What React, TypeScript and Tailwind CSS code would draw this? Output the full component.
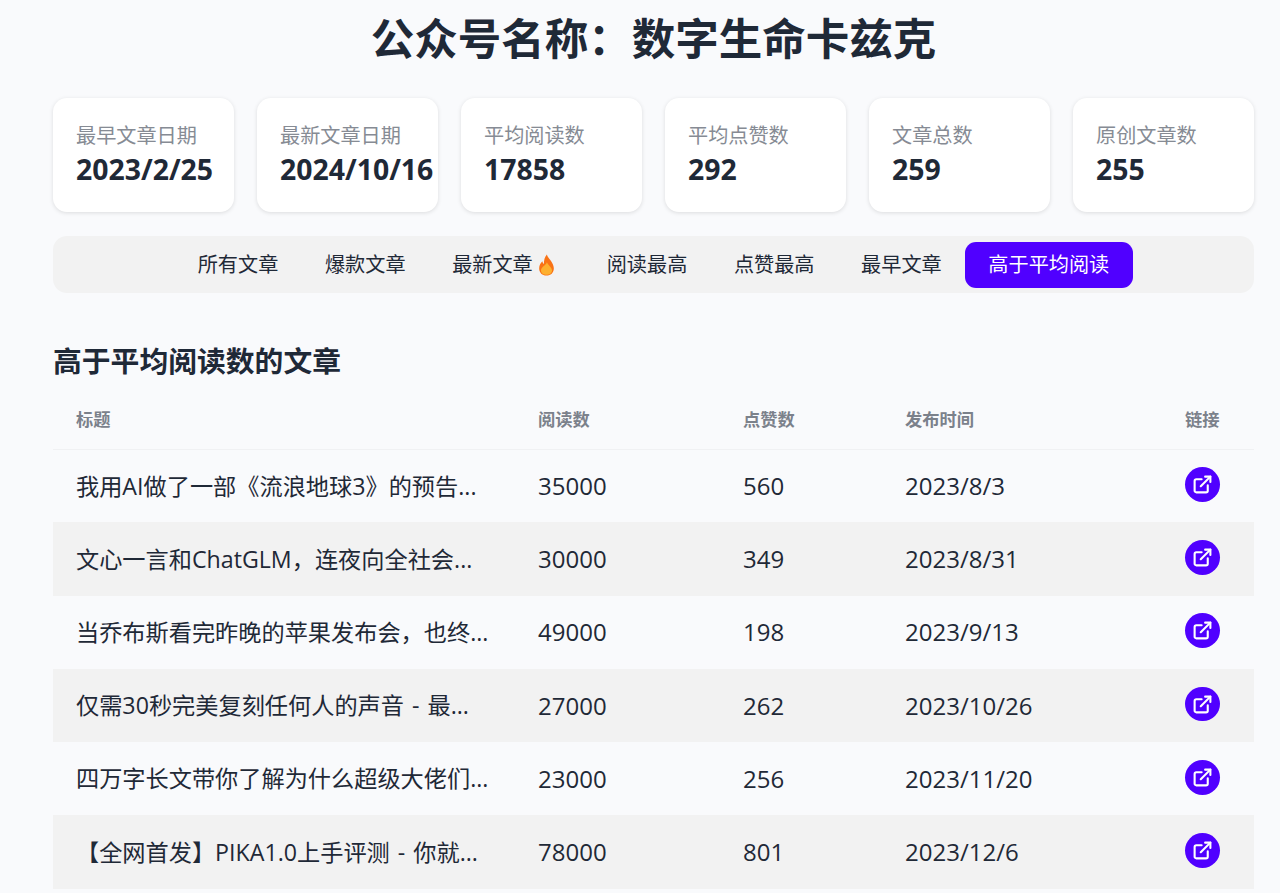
import { ExternalLink } from "lucide-react";

const stats = [
  { label: "最早文章日期", value: "2023/2/25" },
  { label: "最新文章日期", value: "2024/10/16" },
  { label: "平均阅读数", value: "17858" },
  { label: "平均点赞数", value: "292" },
  { label: "文章总数", value: "259" },
  { label: "原创文章数", value: "255" },
];

const tabs = ["所有文章", "爆款文章", "最新文章", "阅读最高", "点赞最高", "最早文章", "高于平均阅读"];

const rows = [
  ["我用AI做了一部《流浪地球3》的预告...", "35000", "560", "2023/8/3"],
  ["文心一言和ChatGLM，连夜向全社会...", "30000", "349", "2023/8/31"],
  ["当乔布斯看完昨晚的苹果发布会，也终...", "49000", "198", "2023/9/13"],
  ["仅需30秒完美复刻任何人的声音 - 最...", "27000", "262", "2023/10/26"],
  ["四万字长文带你了解为什么超级大佬们...", "23000", "256", "2023/11/20"],
  ["【全网首发】PIKA1.0上手评测 - 你就...", "78000", "801", "2023/12/6"],
];

function Flame() {
  return (
    <svg viewBox="0 0 18 24" className="w-[17px] h-[22px] ml-[5px] mr-[5.3px]">
      <path d="M9.5 0.5C10 4.5 16.8 8.5 17 15.5C17 20.5 13.5 23.5 9 23.5C4.5 23.5 1 20.5 1 15.5C1 12 3 9.5 4.5 8C4.8 9.5 5.3 10.5 6.2 11C6 7 7 3 9.5 0.5Z" fill="#f97316" />
      <path d="M9.5 9C10.5 12 15 14.5 15 18C15 21 12.3 22.7 9 22.7C5.7 22.7 3 21 3 18C3 14.5 8 12.5 9.5 9Z" fill="#fdb02f" />
    </svg>
  );
}

export default function App() {
  return (
    <div className="h-[893px] overflow-hidden bg-[#f9fafc] pl-[53px] pr-[26px] text-[#1f2937] font-['Open_Sans','Noto_Sans_CJK_SC',sans-serif]">
      <h1 className="h-[78px] flex items-center justify-center text-[43.5px] font-bold leading-none">
        公众号名称：数字生命卡兹克
      </h1>

      <div className="mt-[20px] flex gap-[23px]">
        {stats.map((s) => (
          <div key={s.label} className="w-[181px] h-[114px] px-[23px] pt-[23px] bg-white rounded-[14px] shadow-[0_1px_4px_rgba(0,0,0,0.12)]">
            <div className="text-[20.16px] leading-[29px] text-[#868b94] whitespace-nowrap">{s.label}</div>
            <div className="mt-[2px] text-[28.4px] leading-[34px] font-bold whitespace-nowrap">{s.value}</div>
          </div>
        ))}
      </div>

      <div className="mt-[24px] h-[57px] flex items-center justify-center bg-[#f2f2f2] rounded-[14px]">
        {tabs.map((t, i) => (
          <div
            key={t}
            className={
              i === 6
                ? "h-[46px] flex items-center px-[23.3px] rounded-[11px] bg-[#5000ff] text-white text-[20.16px]"
                : "h-[46px] flex items-center px-[23.3px] text-[20.16px]"
            }
          >
            {t}
            {i === 2 && <Flame />}
          </div>
        ))}
      </div>

      <h2 className="mt-[50px] h-[36px] flex items-center text-[28.8px] font-bold">高于平均阅读数的文章</h2>

      <table className="mt-[12px] w-full table-fixed border-collapse">
        <thead>
          <tr className="h-[58px] border-b border-[#f0f1f3] text-left text-[17.28px] font-bold text-[#7b818b]">
            <th className="w-[462px] pl-[23px]">标题</th>
            <th className="w-[205px] pl-[23px]">阅读数</th>
            <th className="w-[162px] pl-[23px]">点赞数</th>
            <th className="w-[280px] pl-[23px]">发布时间</th>
            <th className="pl-[23px]">链接</th>
          </tr>
        </thead>
        <tbody>
          {rows.map((r, i) => (
            <tr key={r[0]} className={i % 2 === 1 ? "h-[73.3px] bg-[#f2f2f2] text-[24px]" : "h-[73.3px] text-[24px]"}>
              <td className="pl-[23px] text-[23.2px] [word-spacing:2px] whitespace-nowrap overflow-hidden">{r[0]}</td>
              <td className="pl-[23px]">{r[1]}</td>
              <td className="pl-[23px]">{r[2]}</td>
              <td className="pl-[23px]">{r[3]}</td>
              <td className="pl-[23px]">
                <span className="mb-[3px] size-[34.5px] flex items-center justify-center rounded-full bg-[#5000ff] text-white">
                  <ExternalLink className="size-[21px]" strokeWidth={2.4} />
                </span>
              </td>
            </tr>
          ))}
        </tbody>
      </table>
    </div>
  );
}
